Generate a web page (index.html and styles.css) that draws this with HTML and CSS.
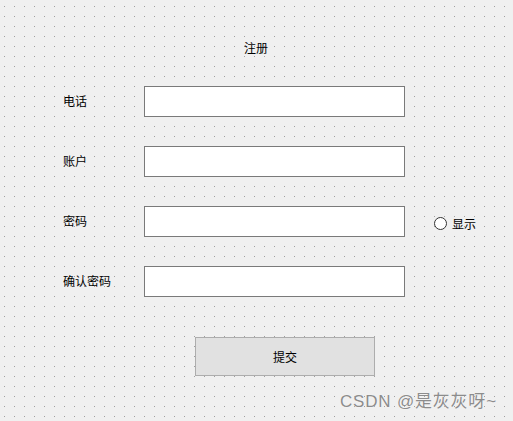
FILE: index.html
```html
<!DOCTYPE html>
<html lang="zh">
<head>
<meta charset="utf-8">
<title>注册</title>
<link rel="stylesheet" href="styles.css">
</head>
<body>
<div class="canvas">
  <div class="title">注册</div>
  <div class="row">
    <span class="label">电话</span>
    <div class="field"></div>
  </div>
  <div class="row">
    <span class="label">账户</span>
    <div class="field"></div>
  </div>
  <div class="row">
    <span class="label">密码</span>
    <div class="field"></div>
    <span class="radio"><span class="circle"></span><span class="radio-text">显示</span></span>
  </div>
  <div class="row">
    <span class="label">确认密码</span>
    <div class="field"></div>
  </div>
  <div class="btn">提交</div>
  <div class="watermark">CSDN @是灰灰呀~</div>
</div>
</body>
</html>
```
FILE: styles.css
```css
html, body {
  margin: 0;
  padding: 0;
}
body {
  width: 513px;
  height: 421px;
  overflow: hidden;
  background-color: #f0f0f0;
  font-family: "Noto Sans CJK SC", "Noto Sans", sans-serif;
  font-size: 12px;
  color: #000;
}
.canvas {
  position: relative;
  width: 513px;
  height: 421px;
  box-sizing: border-box;
  padding-top: 40px;
  background-color: #f0f0f0;
  background-image:
    linear-gradient(to right, transparent 1px, #f0f0f0 1px),
    linear-gradient(to bottom, #a0a0a0 1px, transparent 1px);
  background-size: 10px 10px, 10px 10px;
  background-position: 4px 6px, 4px 6px;
}
.title {
  height: 16px;
  line-height: 16px;
  padding-left: 244px;
  margin-bottom: 30px;
}
.row {
  display: flex;
  align-items: center;
  height: 31px;
  margin-left: 63px;
  margin-bottom: 29px;
}
.row:last-of-type {
  margin-bottom: 0;
}
.label {
  width: 81px;
  line-height: 16px;
  margin-top: -1px;
}
.field {
  width: 261px;
  height: 31px;
  box-sizing: border-box;
  border: 1px solid #7a7a7a;
  background: #fff;
}
.radio {
  display: flex;
  align-items: center;
  margin-left: 29px;
  margin-top: 4px;
}
.circle {
  width: 13px;
  height: 13px;
  box-sizing: border-box;
  border: 1px solid #333;
  border-radius: 50%;
  background: #fff;
  margin-right: 5px;
}
.radio-text {
  line-height: 16px;
}
.btn {
  margin-top: 40px;
  margin-left: 195px;
  width: 180px;
  height: 39px;
  box-sizing: border-box;
  border: 1px solid #adadad;
  background: #e1e1e1;
  display: flex;
  align-items: center;
  justify-content: center;
}
.watermark {
  position: absolute;
  left: 340px;
  top: 392px;
  font-family: "Liberation Sans", "Noto Sans CJK SC", sans-serif;
  font-size: 17px;
  letter-spacing: 0.8px;
  line-height: 20px;
  color: #8c8c8c;
  text-shadow: 0 0 1px #fff;
}
```
